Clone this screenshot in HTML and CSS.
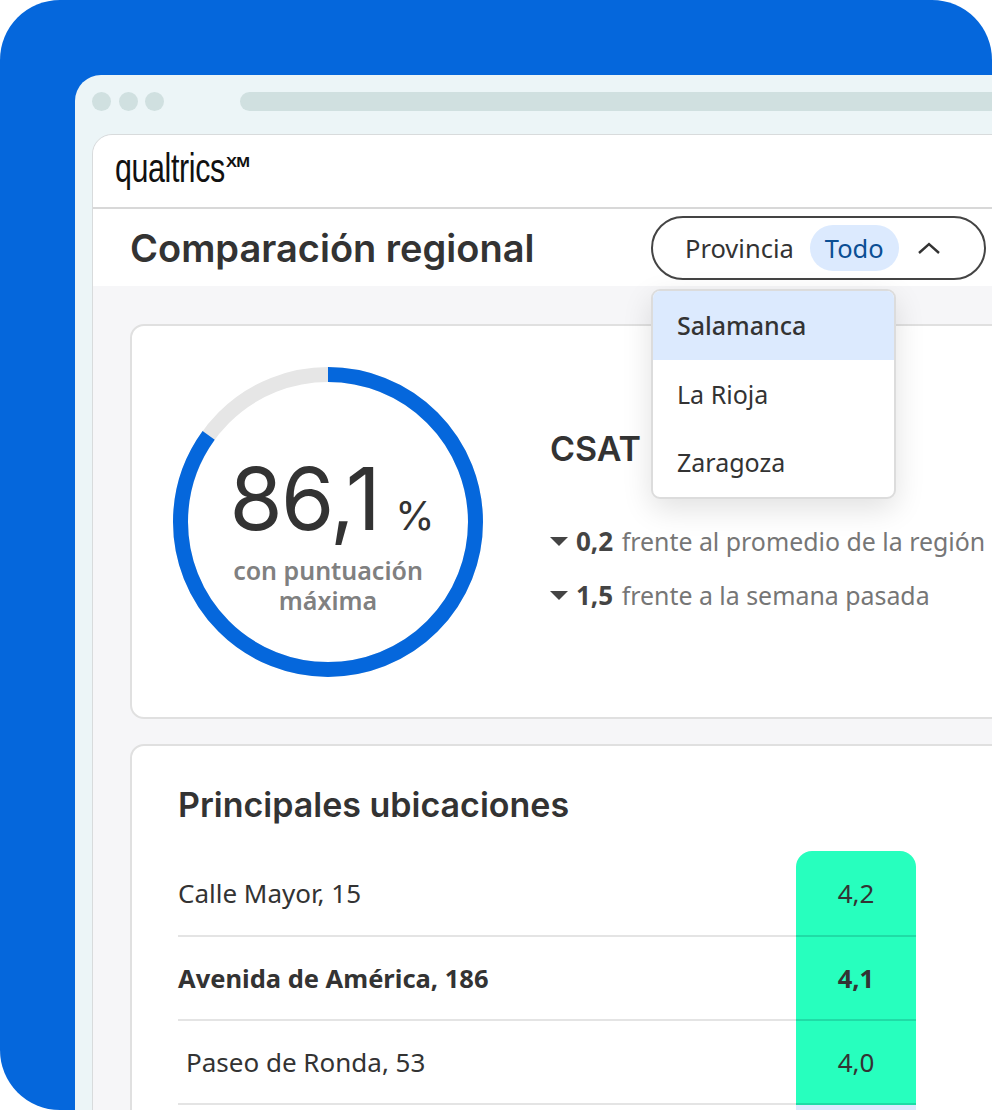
FILE: index.html
```html
<!DOCTYPE html>
<html lang="es">
<head>
    <meta charset="UTF-8">
    <title>Comparación regional</title>
    <link rel="stylesheet" href="styles.css">
</head>
<body>
    <div class="stage">
        <div class="window">
            <div class="window-bar">
                <div class="dots">
                    <span class="dot"></span>
                    <span class="dot"></span>
                    <span class="dot"></span>
                </div>
                <div class="address"></div>
            </div>

            <div class="frame">
                <div class="logo-bar">
                    <span class="logo">qualtrics<sup>XM</sup></span>
                </div>

                <div class="title-bar">
                    <h1>Comparación regional</h1>
                    <div class="filter">
                        <span class="filter-label">Provincia</span>
                        <span class="filter-value">Todo</span>
                        <svg class="chevron" width="24" height="14" viewBox="0 0 24 14">
                            <path d="M2 12 L12 3 L22 12" fill="none" stroke="#333" stroke-width="2.4"/>
                        </svg>
                    </div>
                    <ul class="menu">
                        <li class="selected">Salamanca</li>
                        <li>La Rioja</li>
                        <li>Zaragoza</li>
                    </ul>
                </div>

                <div class="content">
                    <section class="card score-card">
                        <div class="gauge">
                            <svg width="310" height="310" viewBox="0 0 310 310">
                                <circle cx="155" cy="155" r="147.5" fill="none" stroke="#e6e6e6" stroke-width="15"/>
                                <circle cx="155" cy="155" r="147.5" fill="none" stroke="#0567dc" stroke-width="15"
                                    pathLength="100" stroke-dasharray="85 15" transform="rotate(-90 155 155)"/>
                            </svg>
                            <div class="gauge-text">
                                <div class="gauge-value">86,1<span class="percent">%</span></div>
                                <div class="gauge-label">con puntuación<br>máxima</div>
                            </div>
                        </div>
                        <div class="stats">
                            <h2>CSAT</h2>
                            <p class="stat"><span class="arrow"></span><b>0,2</b> frente al promedio de la región</p>
                            <p class="stat"><span class="arrow"></span><b>1,5</b> frente a la semana pasada</p>
                        </div>
                    </section>

                    <section class="card table-card">
                        <h2>Principales ubicaciones</h2>
                        <div class="rows">
                            <div class="row">
                                <span class="place">Calle Mayor, 15</span>
                                <span class="cell first">4,2</span>
                            </div>
                            <div class="row strong">
                                <span class="place">Avenida de América, 186</span>
                                <span class="cell">4,1</span>
                            </div>
                            <div class="row">
                                <span class="place indent">Paseo de Ronda, 53</span>
                                <span class="cell">4,0</span>
                            </div>
                            <div class="row">
                                <span class="place"></span>
                                <span class="cell low"></span>
                            </div>
                        </div>
                    </section>
                </div>
            </div>
        </div>
    </div>
</body>
</html>
```

FILE: styles.css
```css
* {
    box-sizing: border-box;
}
html, body {
    margin: 0;
    background: #fff;
}
body {
    font-family: "Noto Sans", Arial, sans-serif;
    color: #333;
}
.stage {
    width: 992px;
    height: 1110px;
    padding: 75px 0 0 75px;
    background: #0567dc;
    border-radius: 60px 60px 0 60px;
    overflow: hidden;
}
.window {
    width: 1100px;
    height: 1100px;
    padding-left: 17px;
    background: #ecf5f7;
    border-radius: 26px 0 0 0;
}
.window-bar {
    height: 59px;
    display: flex;
    align-items: flex-start;
    padding-top: 17px;
}
.dots {
    display: flex;
    gap: 7.5px;
    margin-right: 76px;
}
.dot {
    width: 19px;
    height: 19px;
    border-radius: 50%;
    background: #d0e0e0;
}
.address {
    width: 900px;
    height: 19px;
    border-radius: 10px;
    background: #d0e0e0;
}
.frame {
    height: 1000px;
    background: #f6f6f8;
    border: 1px solid #d8dbdc;
    border-radius: 20px 0 0 0;
}
.logo-bar {
    height: 74px;
    padding-left: 22px;
    background: #fff;
    border-bottom: 2px solid #d8d8d8;
    border-radius: 20px 0 0 0;
    display: flex;
    align-items: center;
}
.logo {
    display: inline-block;
    font-family: "Liberation Sans", sans-serif;
    font-size: 40px;
    color: #111;
    letter-spacing: -0.5px;
    margin-top: -6px;
    transform: scaleX(0.76);
    transform-origin: left center;
}
.logo sup {
    display: inline-block;
    font-size: 14px;
    font-weight: bold;
    line-height: 0;
    vertical-align: 15px;
    margin-left: 2px;
    transform: scaleX(1.55);
    transform-origin: left center;
}
.title-bar {
    position: relative;
    height: 77px;
    padding-left: 37px;
    background: #fff;
    display: flex;
    align-items: center;
}
h1 {
    margin: 0;
    width: 521px;
    font-family: Inter, sans-serif;
    font-size: 38px;
    font-weight: 600;
    color: #333;
}
.filter {
    width: 335px;
    height: 64px;
    margin-top: 1px;
    padding-left: 32px;
    border: 2px solid #444;
    border-radius: 32px;
    display: flex;
    align-items: center;
    font-size: 25.5px;
    background: #fff;
}
.filter-value {
    margin: 0 18px 0 16px;
    padding: 0 15px;
    height: 46px;
    line-height: 46px;
    border-radius: 23px;
    background: #dceafe;
    color: #0b4f94;
}
.menu {
    position: absolute;
    z-index: 2;
    left: 558px;
    top: 80px;
    width: 245px;
    margin: 0;
    padding: 0;
    list-style: none;
    background: #fff;
    border: 2px solid #dcdcdc;
    border-radius: 9px;
    overflow: hidden;
    box-shadow: 0 10px 30px rgba(0, 0, 0, 0.12);
    font-size: 25px;
}
.menu li {
    height: 68.5px;
    line-height: 68px;
    padding-left: 24px;
}
.menu li.selected {
    background: #dceafe;
    font-weight: 500;
}
.content {
    padding: 38px 0 0 37px;
    display: flex;
    flex-direction: column;
    gap: 25px;
}
.card {
    width: 1000px;
    background: #fff;
    border: 2px solid #e0e0e0;
    border-radius: 14px;
}
.score-card {
    height: 395px;
    padding: 41px 0 0 41px;
    display: flex;
}
.gauge {
    position: relative;
    width: 310px;
    height: 310px;
    margin-right: 67px;
}
.gauge-text {
    position: absolute;
    inset: 0;
    padding-top: 92px;
    text-align: center;
}
.gauge-value {
    padding-left: 8px;
    font-family: Inter, sans-serif;
    font-size: 86px;
    font-weight: 400;
    letter-spacing: -1.5px;
    line-height: 80px;
    color: #333;
}
.percent {
    font-size: 40px;
    letter-spacing: 0;
    margin-left: 16px;
}
.gauge-label {
    margin-top: -1px;
    font-size: 25px;
    font-weight: 600;
    line-height: 30px;
    color: #808080;
}
.stats h2 {
    margin: 61px 0 54px;
    font-family: Inter, sans-serif;
    font-size: 34px;
    font-weight: 600;
}
.stat {
    margin: 0 0 18px;
    height: 36px;
    font-size: 24.9px;
    line-height: 36px;
    color: #767676;
    display: flex;
    align-items: center;
    white-space: pre;
}
.stat b {
    font-size: 26px;
    margin-right: 2px;
    color: #444;
}
.arrow {
    width: 0;
    height: 0;
    margin-right: 8px;
    border-left: 9px solid transparent;
    border-right: 9px solid transparent;
    border-top: 9px solid #444;
}
.table-card {
    padding: 38px 0 0 46px;
    height: 500px;
}
.table-card h2 {
    margin: 0 0 26px;
    font-family: Inter, sans-serif;
    font-size: 34px;
    font-weight: 600;
}
.rows {
    width: 738px;
}
.row {
    height: 84px;
    display: flex;
    justify-content: space-between;
    align-items: stretch;
    border-bottom: 2px solid #e4e4e4;
    font-size: 26px;
}
.row:first-child {
    height: 86px;
}
.place {
    align-self: center;
}
.indent {
    padding-left: 8px;
}
.strong {
    font-weight: bold;
    font-size: 25.5px;
}
.cell {
    width: 120px;
    margin-bottom: -2px;
    background: #27ffbe;
    border-bottom: 2px solid #1fdca6;
    display: flex;
    align-items: center;
    justify-content: center;
}
.cell.first {
    border-radius: 16px 16px 0 0;
}
.cell.low {
    background: #dceafe;
}
```
